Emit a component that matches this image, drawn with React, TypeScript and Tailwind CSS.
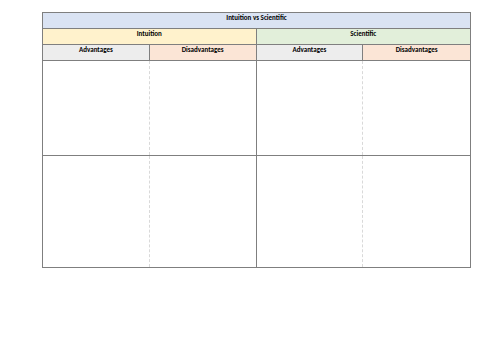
export default function App() {
  const font = { fontFamily: '"Carlito", "Liberation Sans", Arial, sans-serif' };

  return (
    <div className="w-[500px] h-[353px] bg-white pt-[12px] pl-[42px]">
      <div
        className="w-[429px] border border-[#7f7f7f] text-[7px] font-bold text-black leading-none"
        style={font}
      >
        {/* Title */}
        <div className="h-[16px] bg-[#dae3f3] border-b border-[#7f7f7f] flex justify-center pt-[1px]">
          Intuition vs Scientific
        </div>

        {/* Method headers */}
        <div className="grid grid-cols-2 h-[16px] border-b border-[#7f7f7f]">
          <div className="bg-[#fff2cc] border-r border-[#7f7f7f] flex justify-center pt-[1px]">
            Intuition
          </div>
          <div className="bg-[#e2efda] flex justify-center pt-[1px]">Scientific</div>
        </div>

        {/* Adv / Disadv headers */}
        <div className="grid grid-cols-4 h-[16px] border-b border-[#7f7f7f]">
          <div className="bg-[#ededed] border-r border-[#7f7f7f] flex justify-center pt-[1px]">
            Advantages
          </div>
          <div className="bg-[#fbe5d6] border-r border-[#7f7f7f] flex justify-center pt-[1px]">
            Disadvantages
          </div>
          <div className="bg-[#ededed] border-r border-[#7f7f7f] flex justify-center pt-[1px]">
            Advantages
          </div>
          <div className="bg-[#fbe5d6] flex justify-center pt-[1px]">Disadvantages</div>
        </div>

        {/* Body rows */}
        <div className="grid grid-cols-4 h-[95px] border-b border-[#7f7f7f]">
          <div className="border-r border-dashed border-[#d9d9d9]" />
          <div className="border-r border-[#7f7f7f]" />
          <div className="border-r border-dashed border-[#d9d9d9]" />
          <div />
        </div>
        <div className="grid grid-cols-4 h-[111px]">
          <div className="border-r border-dashed border-[#d9d9d9]" />
          <div className="border-r border-[#7f7f7f]" />
          <div className="border-r border-dashed border-[#d9d9d9]" />
          <div />
        </div>
      </div>
    </div>
  );
}
